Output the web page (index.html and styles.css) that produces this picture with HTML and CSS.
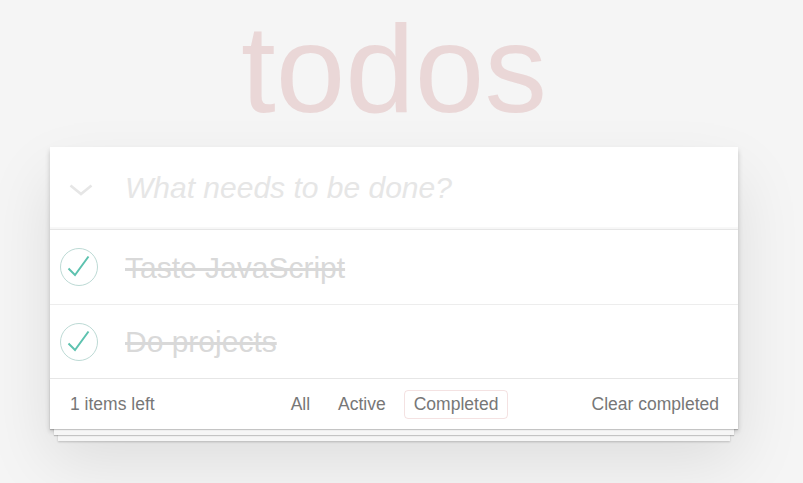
FILE: index.html
```html
<!DOCTYPE html>
<html lang="en">
<head>
<meta charset="utf-8">
<title>todos</title>
<link rel="stylesheet" href="styles.css">
</head>
<body>
<section class="todoapp">
  <h1 class="title">todos</h1>
  <div class="card">
    <header class="new-row">
      <span class="toggle-all">
        <svg width="24" height="14" viewBox="0 0 24 14"><path d="M1.5 2.5 L12 11 L22.5 2.5" fill="none" stroke="#e6e6e6" stroke-width="2.6"/></svg>
      </span>
      <input class="new-todo" type="text" placeholder="What needs to be done?">
    </header>
    <ul class="todo-list">
      <li class="todo completed">
        <span class="check">
          <svg width="50" height="50" viewBox="0 0 50 50"><circle cx="25" cy="25" r="18.5" fill="none" stroke="#bddad5" stroke-width="1"/><path d="M14.5 26.5 L21 33 L34.5 14.5" fill="none" stroke="#5dc2af" stroke-width="2"/></svg>
        </span>
        <label class="label">Taste JavaScript</label>
      </li>
      <li class="todo completed">
        <span class="check">
          <svg width="50" height="50" viewBox="0 0 50 50"><circle cx="25" cy="25" r="18.5" fill="none" stroke="#bddad5" stroke-width="1"/><path d="M14.5 26.5 L21 33 L34.5 14.5" fill="none" stroke="#5dc2af" stroke-width="2"/></svg>
        </span>
        <label class="label">Do projects</label>
      </li>
    </ul>
    <footer class="footer">
      <span class="count">1 items left</span>
      <ul class="filters">
        <li><a class="filter">All</a></li>
        <li><a class="filter">Active</a></li>
        <li><a class="filter selected">Completed</a></li>
      </ul>
      <span class="clear">Clear completed</span>
    </footer>
  </div>
</section>
</body>
</html>
```
FILE: styles.css
```css
html {
  margin: 0;
  padding: 0;
  background: #f5f5f5;
  min-height: 100%;
}
body {
  margin: 0;
  padding: 0 15px 60px 0;
  background: #f5f5f5;
  font-family: "Liberation Sans", Arial, sans-serif;
  color: #4d4d4d;
  min-height: 483px;
  box-sizing: border-box;
}
.todoapp {
  width: 688px;
  margin: 0 auto;
}
.title {
  margin: 6px 0 16px;
  font-size: 125px;
  line-height: 125px;
  height: 125px;
  font-weight: 100;
  text-align: center;
  color: rgba(175, 47, 47, 0.15);
}
.card {
  position: relative;
  background: #fff;
  box-shadow: 0 2.5px 5px rgba(0, 0, 0, 0.2), 0 31px 62px rgba(0, 0, 0, 0.1);
}
.new-row {
  display: flex;
  align-items: center;
  height: 82px;
  box-shadow: inset 0 -2px 1px rgba(0, 0, 0, 0.03);
}
.toggle-all {
  width: 75px;
  display: flex;
  justify-content: center;
  padding-top: 4px;
  padding-right: 14px;
  box-sizing: border-box;
}
.toggle-all svg {
  display: block;
}
.new-todo {
  flex: 1;
  border: none;
  outline: none;
  background: transparent;
  padding: 0;
  height: 42px;
  line-height: 42px;
  font-family: inherit;
  font-size: 30px;
  color: #4d4d4d;
}
.new-todo::placeholder {
  font-style: italic;
  color: #e6e6e6;
}
.todo-list {
  list-style: none;
  margin: 0;
  padding: 0;
  border-top: 1px solid #e6e6e6;
}
.todo {
  display: flex;
  align-items: center;
  height: 74px;
  border-bottom: 1px solid #ededed;
}
.todo:last-child {
  height: 73px;
  border-bottom: none;
}
.check {
  width: 75px;
  display: flex;
  justify-content: flex-start;
  padding-left: 4px;
  box-sizing: border-box;
}
.check svg {
  display: block;
}
.label {
  font-size: 30px;
  line-height: 36px;
  color: #d9d9d9;
  text-decoration: line-through;
  padding-top: 1px;
}
.footer {
  position: relative;
  display: grid;
  grid-template-columns: 1fr auto 1fr;
  align-items: center;
  height: 50px;
  padding: 0 19px 0 20px;
  border-top: 1px solid #e6e6e6;
  color: #777;
  font-size: 17.5px;
}
.footer::before {
  content: '';
  position: absolute;
  left: 0;
  right: 0;
  bottom: 0;
  height: 50px;
  overflow: hidden;
  box-shadow: 0 1px 1px rgba(0, 0, 0, 0.2),
    0 10px 0 -4px #f6f6f6,
    0 11px 1px -4px rgba(0, 0, 0, 0.2),
    0 20px 0 -8px #f6f6f6,
    0 21px 2px -8px rgba(0, 0, 0, 0.2);
  z-index: 0;
}
.count, .filters, .clear {
  position: relative;
  z-index: 1;
}
.count {
  padding-top: 1px;
}
.clear {
  justify-self: end;
  padding-top: 1px;
}
.filters {
  list-style: none;
  margin: 0;
  padding: 0;
  display: flex;
}
.filter {
  display: block;
  margin: 0 4px;
  padding: 4px 9px;
  border: 1px solid transparent;
  border-radius: 4px;
  color: #777;
  line-height: 19px;
}
.filter.selected {
  border-color: rgba(175, 47, 47, 0.14);
}
```
